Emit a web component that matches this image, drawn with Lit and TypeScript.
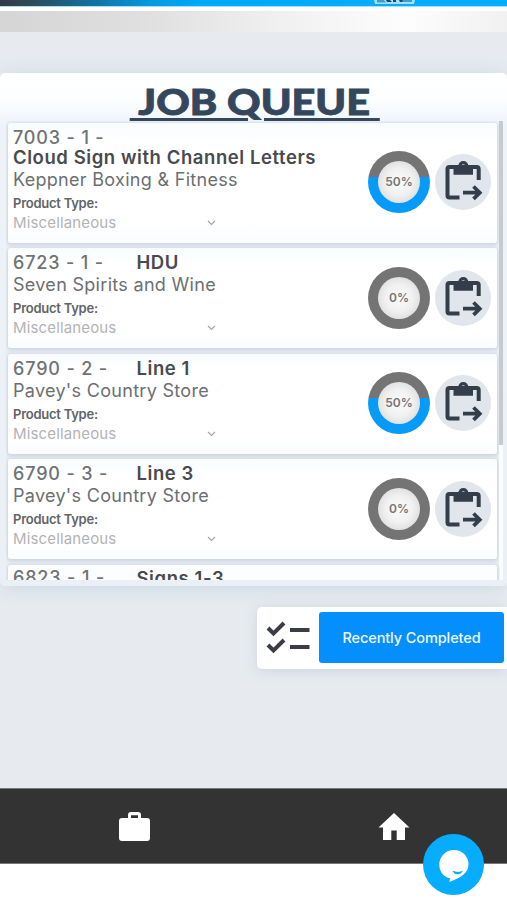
import { LitElement, html, css } from "lit";
import { customElement, property } from "lit/decorators.js";

interface Job {
  code: string;
  name: string;
  client: string;
  percent: number;
  stacked?: boolean;
}

const JOBS: Job[] = [
  { code: "7003 - 1 -", name: "Cloud Sign with Channel Letters", client: "Keppner Boxing & Fitness", percent: 50, stacked: true },
  { code: "6723 - 1 -", name: "HDU", client: "Seven Spirits and Wine", percent: 0 },
  { code: "6790 - 2 -", name: "Line 1", client: "Pavey's Country Store", percent: 50 },
  { code: "6790 - 3 -", name: "Line 3", client: "Pavey's Country Store", percent: 0 },
];

const NEXT_JOB = { code: "6823 - 1 -", name: "Signs 1-3" };

@customElement("progress-ring")
class ProgressRing extends LitElement {
  @property({ type: Number }) percent = 0;

  static styles = css`
    :host { display: block; width: 62px; height: 62px; }
    .ring { width: 62px; height: 62px; border-radius: 50%; display: grid; place-items: center; }
    .core {
      width: 42px; height: 42px; border-radius: 50%;
      display: grid; place-items: center;
      background: radial-gradient(circle, #fbfbfb 0%, #f1f1f1 45%, #cfcfcf 100%);
      font: 600 12px/1 Inter, sans-serif; color: #757575;
    }
  `;

  render() {
    const split = this.percent ? 41.5 : 100;
    return html`<div class="ring" style="background:linear-gradient(#747474 ${split}%, #069bf8 ${split}%)">
      <div class="core">${this.percent}%</div>
    </div>`;
  }
}

@customElement("job-card")
class JobCard extends LitElement {
  @property({ attribute: false }) job!: Job;

  static styles = css`
    :host { display: block; flex: none; }
    .card {
      box-sizing: border-box; height: 100px; padding: 5px 6px 0 5px;
      display: flex; justify-content: space-between;
      background: linear-gradient(#f9fcfe, #fff 18%, #fff 82%, #fafcfe);
      border-radius: 3px; box-shadow: 0 1px 4px 1px #c9d0da;
      font-family: Inter, sans-serif; white-space: nowrap;
    }
    .stacked { height: 119.5px; }
    .head { display: flex; height: 20px; line-height: 20px; font-size: 18px; }
    .stacked .head { flex-direction: column; height: 39.5px; line-height: 19.5px; }
    .code { width: 123.5px; color: #707274; font-weight: 500; letter-spacing: 0.85px; }
    .name { color: #484a4d; font-size: 18.5px; line-height: 18.5px; font-weight: 600; letter-spacing: 0.57px; }
    .client { height: 24px; line-height: 23px; font-size: 18px; color: #6c6f72; letter-spacing: 0.3px; }
    .label { height: 23px; line-height: 23px; font-size: 13px; font-weight: 600; color: #626467; letter-spacing: -0.25px; }
    .select { width: 202.5px; height: 16px; display: flex; align-items: center; justify-content: space-between; font-size: 15px; line-height: 16px; color: #b2b3b5; letter-spacing: 0.15px; }
    .chev { width: 9px; height: 6px; display: block; }
    .actions { display: flex; align-items: center; gap: 5px; padding-bottom: 6px; }
    .move { width: 56px; height: 56px; border-radius: 50%; background: #e0e6ec; }
    .move svg { display: block; }
  `;

  render() {
    const j = this.job;
    return html`<div class="card ${j.stacked ? "stacked" : ""}">
      <div>
        <div class="head"><span class="code">${j.code}</span><span class="name">${j.name}</span></div>
        <div class="client">${j.client}</div>
        <div class="label">Product Type:</div>
        <div class="select">Miscellaneous
          <svg class="chev" viewBox="0 0 9 6"><path d="M1 1l3.5 3.4L8 1" fill="none" stroke="#a3a5a8" stroke-width="1.2"/></svg>
        </div>
      </div>
      <div class="actions">
        <progress-ring .percent=${j.percent}></progress-ring>
        <div class="move">
          <svg width="56" height="56" viewBox="0 0 56 56" fill="none" stroke="#343d4a" stroke-width="4">
            <path d="M24.5 43.6H14.5Q12.5 43.6 12.5 41.6V15Q12.5 13 14.5 13H41.5Q43.7 13 43.7 15V26"/>
            <path d="M18.5 12H23.2A5.1 5.1 0 0 1 33.4 12H38V20.7H18.5ZM28.3 10.2A2 2 0 1 0 28.3 14.2A2 2 0 1 0 28.3 10.2Z" fill="#343d4a" fill-rule="evenodd" stroke="none"/>
            <path d="M28 38.7H44.5M38.5 32.5L44.8 38.7L38.5 44.9" stroke-width="3.7"/>
          </svg>
        </div>
      </div>
    </div>`;
  }
}

@customElement("app-root")
class AppRoot extends LitElement {
  static styles = css`
    :host { display: block; }
    .page { width: 507px; height: 900px; overflow: hidden; display: flex; flex-direction: column; background: #e7ebef; font-family: Inter, sans-serif; position: relative; }
    .band { height: 6px; flex: none; padding-left: 374px; background: linear-gradient(90deg, #323a42 0, #2d4958 30px, #12709e 90px, #0798de 150px, #00aafb 200px, #00aeff); border-bottom: 1px solid #a9def8; box-sizing: content-box; }
    .tag { width: 41px; height: 4px; display: block; }
    .strip { height: 21px; flex: none; border-top: 4px solid #fff; background: linear-gradient(90deg, #d5d5d5, #dfdfdf 28%, #eff0ef 55%, #fdfdfd 80%, #f1f1f1); }
    .panel {
      margin-top: 41px; height: 513px; flex: none; box-sizing: border-box; padding-left: 6px;
      display: flex; flex-direction: column;
      background: linear-gradient(#fff, #fdfeff 25px, #eef3fa 55px, #ebf0f7);
      border-radius: 5px; box-shadow: 0 2px 20px #c9d6e3;
    }
    .title { height: 48px; flex: none; display: flex; justify-content: center; margin: 0 4px 0 0; font-family: Lato, Inter, sans-serif; font-size: 36px; line-height: 57px; font-weight: 900; color: #34475c; white-space: pre; -webkit-text-stroke: 0.9px #34475c; }
    .title span { transform: scaleX(1.15); text-decoration: underline; text-decoration-thickness: 2.5px; text-underline-offset: 2.5px; }
    .view { height: 459px; flex: none; display: flex; overflow: hidden; }
    .list { width: 493px; height: 459px; box-sizing: border-box; padding: 2px 2px 0; display: flex; flex-direction: column; gap: 5.5px; }
    .peek {
      height: 15.5px; flex: none; box-sizing: border-box; padding: 3.5px 5px 0; display: flex; overflow: hidden;
      background: #fbfdfe; border-radius: 3px 3px 0 0; clip-path: inset(-6px -3px 0 -3px);
      box-shadow: 0 1px 4px 1px #c9d0da; font-size: 18px; line-height: 20px; white-space: nowrap;
    }
    .peek-code { width: 123.5px; color: #707274; font-weight: 500; letter-spacing: 0.85px; }
    .peek-name { color: #484a4d; font-size: 18.5px; font-weight: 600; letter-spacing: 0.57px; }
    .track { width: 4px; background: #fafcff; }
    .thumb { height: 324px; background: #c7cad0; }
    .recent {
      box-sizing: border-box; align-self: flex-end; margin-top: 21px; width: 250px; height: 62px; flex: none;
      padding: 5px 3px 6px 9px; display: flex; justify-content: space-between; align-items: center;
      background: #fff; border-radius: 5px 0 0 5px; box-shadow: 0 2px 14px #ccd5dd;
    }
    .button { width: 185px; height: 51px; border-radius: 3px; background: #058ffc; color: #eef7ff; display: grid; place-items: center; font-size: 14.5px; font-weight: 500; letter-spacing: -0.1px; }
    .nav { margin-top: 119px; height: 76px; flex: none; box-sizing: border-box; padding: 2px 97px 0 118px; display: flex; justify-content: space-between; align-items: center; background: #333; border-top: 1px solid #777; border-bottom: 1px solid #777; }
    .foot { flex: 1; background: #fff; }
    .chat { position: absolute; left: 423px; top: 834px; width: 61px; height: 61px; }
    svg { display: block; }
  `;

  render() {
    return html`<div class="page">
      <div class="band">
        <svg class="tag" viewBox="0 0 41 4">
          <path d="M0 0H41L40 4H1Z" fill="#a4e0f9"/>
          <path d="M3 0H10L12 2.5H3ZM27 0H38V2H28Z" fill="#3f9dc8"/>
          <path d="M12 0H16L18 2H13ZM19 0H22V2H19ZM25 0H29L28 2H26Z" fill="#174c68"/>
        </svg>
      </div>
      <div class="strip"></div>
      <div class="panel">
        <div class="title"><span>&nbsp;JOB QUEUE&nbsp;</span></div>
        <div class="view">
          <div class="list">
            ${JOBS.map((j) => html`<job-card .job=${j}></job-card>`)}
            <div class="peek"><span class="peek-code">${NEXT_JOB.code}</span><span class="peek-name">${NEXT_JOB.name}</span></div>
          </div>
          <div class="track"><div class="thumb"></div></div>
        </div>
      </div>
      <div class="recent">
        <svg width="44" height="34" viewBox="0 0 44 34" fill="none" stroke="#3c3c46" stroke-width="4">
          <path d="M2 7L7.5 12.5L18 2M2 24L7.5 29.5L18 19"/>
          <path d="M24 9H43.5M24 26H43.5"/>
        </svg>
        <div class="button">Recently Completed</div>
      </div>
      <div class="nav">
        <svg width="33" height="30" viewBox="0 0 33 30">
          <path d="M4 6H10V3Q10 0 13 0H20Q23 0 23 3V6H29Q32 6 32 9V26Q32 29 29 29H4Q1 29 1 26V9Q1 6 4 6ZM13 3.2V6H20V3.2Z" fill="#fff" fill-rule="evenodd"/>
        </svg>
        <svg width="32" height="28" viewBox="0 0 32 28">
          <path d="M16 0L31.5 14.5H27V27H18.7V17.5H13.3V27H5V14.5H.5Z" fill="#fff"/>
        </svg>
      </div>
      <div class="foot"></div>
      <svg class="chat" viewBox="0 0 61 61">
        <circle cx="30.5" cy="30.5" r="30.5" fill="#07adfd"/>
        <path d="M31 16A14.5 14 0 0 1 45.5 30.5C45.5 39 38 43.5 26.5 48L27 44.2C20 43 16.3 37 16.3 30.5A14.5 14.5 0 0 1 31 16Z" fill="#fff"/>
        <path d="M29.5 36.8Q35 39 40 36.8Q38 40.3 34.5 40.3Q31 40.3 29.5 36.8Z" fill="#07adfd"/>
      </svg>
    </div>`;
  }
}
